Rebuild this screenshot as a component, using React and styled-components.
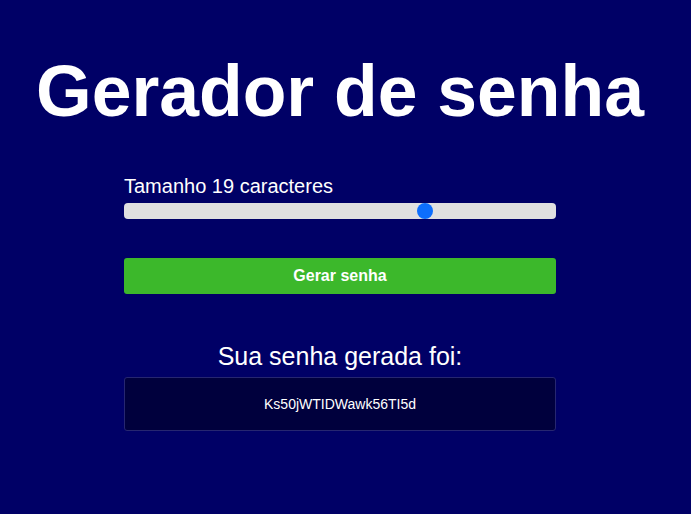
import { useState } from "react";
import styled, { createGlobalStyle } from "styled-components";

const GlobalStyle = createGlobalStyle`
  html, body {
    margin: 0;
    padding: 0;
    background-color: #000066;
    font-family: "Liberation Sans", Arial, sans-serif;
    color: #ffffff;
  }
`;

export default function App() {
  const [size, setSize] = useState(19);

  return (
    <>
      <GlobalStyle />
      <Page>
        <Title>Gerador de senha</Title>
        <Form>
          <Label htmlFor="size">Tamanho {size} caracteres</Label>
          <Slider
            id="size"
            type="range"
            min={0}
            max={27}
            value={size}
            onChange={(e) => setSize(Number(e.target.value))}
          />
          <Button>Gerar senha</Button>
        </Form>
        <ResultTitle>Sua senha gerada foi:</ResultTitle>
        <PasswordBox>Ks50jWTIDWawk56TI5d</PasswordBox>
      </Page>
    </>
  );
}

const Page = styled.main`
  width: 680px;
  display: flex;
  flex-direction: column;
  align-items: center;
`;

const Title = styled.h1`
  margin: 50px 0 0;
  font-size: 71.5px;
  font-weight: 700;
  line-height: 82px;
`;

const Form = styled.div`
  width: 432px;
  display: flex;
  flex-direction: column;
  margin-top: 21px;
`;

const Label = styled.label`
  font-size: 20px;
  line-height: 23px;
  margin-top: 22px;
`;

const Slider = styled.input`
  -webkit-appearance: none;
  appearance: none;
  width: 100%;
  height: 16px;
  margin: 5px 0 0;
  border-radius: 4px;
  background: #e0e0e0;
  outline: none;

  &::-webkit-slider-thumb {
    -webkit-appearance: none;
    width: 16px;
    height: 16px;
    border-radius: 50%;
    background: #0d6efd;
    cursor: pointer;
  }
`;

const Button = styled.button`
  margin-top: 39px;
  height: 36px;
  border: none;
  border-radius: 3px;
  background-color: #3cb82b;
  color: #ffffff;
  font-family: "Liberation Sans", Arial, sans-serif;
  font-size: 16px;
  font-weight: 700;
  cursor: pointer;
`;

const ResultTitle = styled.h2`
  margin: 48px 0 0;
  font-size: 25px;
  font-weight: 400;
  line-height: 29px;
`;

const PasswordBox = styled.div`
  width: 432px;
  height: 54px;
  box-sizing: border-box;
  margin-top: 6px;
  display: flex;
  align-items: center;
  justify-content: center;
  background-color: #00003d;
  border: 1px solid #262670;
  border-radius: 3px;
  font-size: 14px;
`;
